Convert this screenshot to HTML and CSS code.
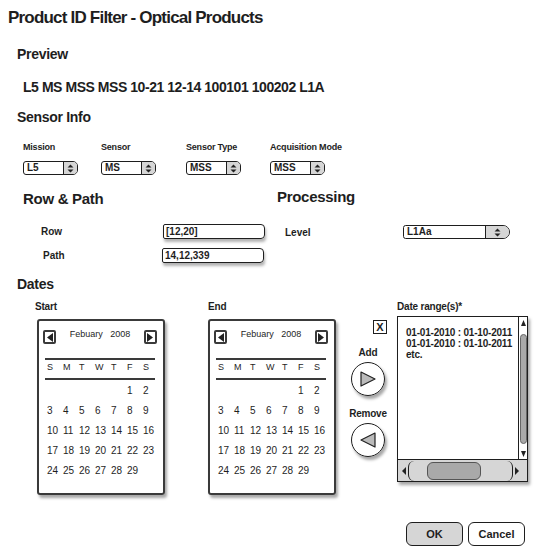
FILE: index.html
```html
<!DOCTYPE html>
<html lang="en">
<head>
  <meta charset="UTF-8" />
  <title>Product ID Filter - Optical Products</title>
  <link rel="stylesheet" href="styles.css">
</head>
<body>
  <div class="page">
    <h1 class="title">Product ID Filter - Optical Products</h1>

    <h2 class="section">Preview</h2>
    <p class="preview">L5 MS MSS MSS 10-21 12-14 100101 100202 L1A</p>

    <h2 class="section sensor-title">Sensor Info</h2>
    <div class="sensor-grid">
      <div class="field">
        <label>Mission</label>
        <div class="combo"><span class="combo-val">L5</span><span class="spin"><svg width="7" height="9" viewBox="0 0 7 9"><path d="M3.5 0.5 L6.5 3.5 H0.5 Z M3.5 8.5 L6.5 5.5 H0.5 Z" fill="#222"/></svg></span></div>
      </div>
      <div class="field">
        <label>Sensor</label>
        <div class="combo"><span class="combo-val">MS</span><span class="spin"><svg width="7" height="9" viewBox="0 0 7 9"><path d="M3.5 0.5 L6.5 3.5 H0.5 Z M3.5 8.5 L6.5 5.5 H0.5 Z" fill="#222"/></svg></span></div>
      </div>
      <div class="field">
        <label>Sensor Type</label>
        <div class="combo"><span class="combo-val">MSS</span><span class="spin"><svg width="7" height="9" viewBox="0 0 7 9"><path d="M3.5 0.5 L6.5 3.5 H0.5 Z M3.5 8.5 L6.5 5.5 H0.5 Z" fill="#222"/></svg></span></div>
      </div>
      <div class="field">
        <label>Acquisition Mode</label>
        <div class="combo"><span class="combo-val">MSS</span><span class="spin"><svg width="7" height="9" viewBox="0 0 7 9"><path d="M3.5 0.5 L6.5 3.5 H0.5 Z M3.5 8.5 L6.5 5.5 H0.5 Z" fill="#222"/></svg></span></div>
      </div>
    </div>

    <div class="rp">
      <div class="rp-col">
        <h3 class="sub">Row &amp; Path</h3>
        <div class="rp-row">
          <span class="rp-label">Row</span>
          <div class="textbox">[12,20]</div>
        </div>
        <div class="rp-row">
          <span class="rp-label path">Path</span>
          <div class="textbox">14,12,339</div>
        </div>
      </div>
      <div class="proc-col">
        <h3 class="sub">Processing</h3>
        <div class="proc-row">
          <span class="rp-label">Level</span>
          <div class="combo level"><span class="combo-val">L1Aa</span><span class="spin"><svg width="7" height="9" viewBox="0 0 7 9"><path d="M3.5 0.5 L6.5 3.5 H0.5 Z M3.5 8.5 L6.5 5.5 H0.5 Z" fill="#222"/></svg></span></div>
        </div>
      </div>
    </div>

    <h2 class="section dates-title">Dates</h2>
    <div class="dates">
      <div class="cal-col">
        <span class="small-label">Start</span>
        <div class="calendar">
          <div class="cal-head">
            <span class="cal-btn"><svg width="6" height="9" viewBox="0 0 6 9"><path d="M6 0 V9 L0 4.5 Z" fill="#222"/></svg></span>
            <span class="cal-month">Febuary&nbsp;&nbsp;&nbsp;2008</span>
            <span class="cal-btn"><svg width="6" height="9" viewBox="0 0 6 9"><path d="M0 0 V9 L6 4.5 Z" fill="#222"/></svg></span>
          </div>
          <div class="cal-days">
            <span>S</span><span>M</span><span>T</span><span>W</span><span>T</span><span>F</span><span>S</span>
          </div>
          <div class="cal-grid">
            <span></span><span></span><span></span><span></span><span></span><span>1</span><span>2</span>
            <span>3</span><span>4</span><span>5</span><span>6</span><span>7</span><span>8</span><span>9</span>
            <span>10</span><span>11</span><span>12</span><span>13</span><span>14</span><span>15</span><span>16</span>
            <span>17</span><span>18</span><span>19</span><span>20</span><span>21</span><span>22</span><span>23</span>
            <span>24</span><span>25</span><span>26</span><span>27</span><span>28</span><span>29</span><span></span>
          </div>
        </div>
      </div>

      <div class="cal-col end">
        <span class="small-label">End</span>
        <div class="calendar">
          <div class="cal-head">
            <span class="cal-btn"><svg width="6" height="9" viewBox="0 0 6 9"><path d="M6 0 V9 L0 4.5 Z" fill="#222"/></svg></span>
            <span class="cal-month">Febuary&nbsp;&nbsp;&nbsp;2008</span>
            <span class="cal-btn"><svg width="6" height="9" viewBox="0 0 6 9"><path d="M0 0 V9 L6 4.5 Z" fill="#222"/></svg></span>
          </div>
          <div class="cal-days">
            <span>S</span><span>M</span><span>T</span><span>W</span><span>T</span><span>F</span><span>S</span>
          </div>
          <div class="cal-grid">
            <span></span><span></span><span></span><span></span><span></span><span>1</span><span>2</span>
            <span>3</span><span>4</span><span>5</span><span>6</span><span>7</span><span>8</span><span>9</span>
            <span>10</span><span>11</span><span>12</span><span>13</span><span>14</span><span>15</span><span>16</span>
            <span>17</span><span>18</span><span>19</span><span>20</span><span>21</span><span>22</span><span>23</span>
            <span>24</span><span>25</span><span>26</span><span>27</span><span>28</span><span>29</span><span></span>
          </div>
        </div>
      </div>

      <div class="actions">
        <span class="x-btn">X</span>
        <span class="small-label">Add</span>
        <span class="round-btn"><svg width="18" height="18" viewBox="0 0 18 18"><path d="M2 2 L16 9 L2 16 Z" fill="#bbb" stroke="#222" stroke-width="1.2" stroke-linejoin="round"/></svg></span>
        <span class="small-label remove">Remove</span>
        <span class="round-btn"><svg width="18" height="18" viewBox="0 0 18 18"><path d="M16 2 L2 9 L16 16 Z" fill="#bbb" stroke="#222" stroke-width="1.2" stroke-linejoin="round"/></svg></span>
      </div>

      <div class="range-col">
        <span class="small-label">Date range(s)*</span>
        <div class="range-box">
          <div class="range-main">
            <div class="range-list">
              <div>01-01-2010 : 01-10-2011</div>
              <div>01-01-2010 : 01-10-2011</div>
              <div>etc.</div>
            </div>
            <div class="vscroll">
              <span class="sb-arrow"><svg width="5" height="6" viewBox="0 0 5 6"><path d="M2.5 0 L5 6 H0 Z" fill="#222"/></svg></span>
              <span class="vthumb"></span>
              <span class="sb-arrow"><svg width="5" height="6" viewBox="0 0 5 6"><path d="M0 0 H5 L2.5 6 Z" fill="#222"/></svg></span>
            </div>
          </div>
          <div class="hscroll">
            <span class="sb-arrow h"><svg width="4" height="8" viewBox="0 0 4 8"><path d="M4 0 V8 L0 4 Z" fill="#222"/></svg></span>
            <span class="htrack"><span class="hthumb"></span></span>
            <span class="sb-arrow h"><svg width="4" height="8" viewBox="0 0 4 8"><path d="M0 0 V8 L4 4 Z" fill="#222"/></svg></span>
          </div>
        </div>
      </div>
    </div>

    <div class="footer">
      <button class="btn primary">OK</button>
      <button class="btn">Cancel</button>
    </div>
  </div>
</body>
</html>
```

FILE: styles.css
```css
:root {
  --ink: #1e1e1e;
  --soft: #3a3a3a;
  --fill: #d6d6d6;
  --thumb: #a9a9a9;
  --shadow: 2px 3px 3px rgba(0, 0, 0, 0.35);
}

* {
  box-sizing: border-box;
  margin: 0;
  padding: 0;
}

body {
  font-family: "Liberation Sans", Arial, sans-serif;
  font-weight: bold;
  color: var(--ink);
  background: #fff;
  width: 543px;
  height: 557px;
  overflow: hidden;
}

.page {
  padding: 8px 0 0 8px;
}

.title {
  font-size: 17px;
  line-height: 20px;
  letter-spacing: -0.8px;
}

.section {
  font-size: 14px;
  line-height: 16px;
  margin: 18px 0 0 9px;
  letter-spacing: -0.3px;
}

.preview {
  font-size: 14px;
  line-height: 18px;
  margin: 16px 0 0 15px;
  letter-spacing: -0.45px;
}

/* sensor info */
.section.sensor-title {
  margin-top: 13px;
}

.sensor-grid {
  display: grid;
  grid-template-columns: 78px 85px 84px 90px;
  margin: 17px 0 0 15px;
}

.field label {
  display: block;
  font-size: 9px;
  line-height: 11px;
  margin-bottom: 8px;
  white-space: nowrap;
  letter-spacing: -0.2px;
}

.combo {
  display: flex;
  width: 55px;
  height: 14px;
  border: 1px solid var(--ink);
  border-radius: 3px 5px 5px 3px;
  background: #fff;
  font-size: 10px;
  line-height: 12px;
  overflow: hidden;
}

.combo-val {
  flex: 1;
  padding-left: 3px;
}

.spin {
  width: 14px;
  display: flex;
  align-items: center;
  justify-content: center;
  border-left: 1px solid var(--ink);
  background: var(--fill);
}

/* row & path / processing */
.rp {
  display: flex;
  margin-top: 15px;
}

.rp-col {
  width: 262px;
  padding-left: 15px;
}

.proc-col {
  flex: 1;
  padding-left: 7px;
}

.sub {
  font-size: 15px;
  line-height: 18px;
  letter-spacing: -0.3px;
}

.proc-col .sub {
  margin-top: -2px;
}

.rp-row {
  display: flex;
  align-items: center;
  margin-top: 16px;
}

.rp-row + .rp-row {
  margin-top: 9px;
}

.rp-label {
  font-size: 10px;
  width: 140px;
  padding-left: 18px;
}

.rp-label.path {
  padding-left: 20px;
  width: 139px;
}

.textbox {
  width: 102px;
  height: 15px;
  border: 1px solid var(--ink);
  border-radius: 2px 4px 4px 2px;
  box-shadow: 1px 3px 3px rgba(0, 0, 0, 0.3);
  font-size: 10px;
  line-height: 13px;
  padding-left: 2px;
}

.proc-row {
  display: flex;
  align-items: center;
  margin-top: 19px;
}

.proc-row .rp-label {
  padding-left: 8px;
  width: 126px;
}

.combo.level {
  width: 107px;
  border-radius: 3px 8px 8px 3px;
}

.combo.level .spin {
  width: 24px;
}

/* dates */
.dates-title {
  margin-top: 13px;
}

.dates {
  display: flex;
  margin: 9px 0 0 27px;
}

.small-label {
  display: block;
  font-size: 10px;
  line-height: 12px;
  white-space: nowrap;
  letter-spacing: -0.2px;
}

.cal-col {
  width: 173px;
}

.cal-col.end {
  width: 140px;
}

.calendar {
  width: 128px;
  height: 176px;
  margin: 6px 0 0 2px;
  border: 2px solid var(--soft);
  border-radius: 3px;
  box-shadow: var(--shadow);
  padding: 7px 6px 0 4px;
  font-weight: normal;
}

.cal-col.end .calendar {
  margin-left: 0;
}

.cal-head {
  display: flex;
  justify-content: space-between;
  align-items: center;
}

.cal-btn {
  width: 13px;
  height: 14px;
  display: flex;
  align-items: center;
  justify-content: center;
  border: 2px solid var(--soft);
  border-radius: 2px;
  margin-top: 2px;
}

.cal-month {
  font-size: 9px;
  margin-top: -4px;
}

.cal-days {
  display: grid;
  grid-template-columns: repeat(7, 16px);
  margin: 14px 2px 0;
  padding: 2px 0 6px 2px;
  border-top: 2px solid var(--soft);
  border-bottom: 2px solid var(--soft);
  font-size: 9px;
  line-height: 10px;
}

.cal-grid {
  display: grid;
  grid-template-columns: repeat(7, 16px);
  grid-auto-rows: 20px;
  margin: 5px 0 0 4px;
  font-size: 10px;
  line-height: 12px;
}

/* add / remove */
.actions {
  width: 48px;
  display: flex;
  flex-direction: column;
  align-items: center;
  padding: 19px 8px 0 0;
}

.x-btn {
  align-self: flex-end;
  margin-right: 1px;
  width: 14px;
  height: 14px;
  border: 1px solid var(--ink);
  font-size: 11px;
  line-height: 12px;
  text-align: center;
}

.actions .small-label {
  margin-top: 13px;
}

.actions .small-label.remove {
  margin-top: 12px;
}

.round-btn {
  width: 34px;
  height: 34px;
  margin-top: 3px;
  border: 1px solid var(--ink);
  border-radius: 50%;
  box-shadow: var(--shadow);
  display: flex;
  align-items: center;
  justify-content: center;
}

/* date ranges */
.range-col {
  padding-left: 1px;
}

.range-box {
  width: 131px;
  height: 166px;
  margin-top: 3px;
  border: 1px solid var(--ink);
  box-shadow: var(--shadow);
  display: flex;
  flex-direction: column;
}

.range-main {
  flex: 1;
  display: flex;
}

.range-list {
  flex: 1;
  padding: 10px 0 0 8px;
  font-size: 10px;
  line-height: 11px;
  white-space: nowrap;
  letter-spacing: -0.2px;
}

.vscroll {
  width: 9px;
  border-left: 1px solid var(--ink);
  display: flex;
  flex-direction: column;
  align-items: center;
}

.sb-arrow {
  height: 11px;
  display: flex;
  align-items: center;
  justify-content: center;
}

.vthumb {
  flex: 1;
  width: 7px;
  margin: 6px 0 4px;
  background: var(--thumb);
  border: 1px solid #666;
  border-radius: 4px;
}

.hscroll {
  height: 22px;
  display: flex;
  align-items: center;
  border-top: 1px solid var(--ink);
  background: var(--fill);
  padding: 0 6px 0 2px;
}

.sb-arrow.h {
  width: 8px;
  height: 20px;
}

.htrack {
  flex: 1;
  height: 20px;
  padding: 1px 0 1px 18px;
  border-left: 1px solid var(--ink);
  border-right: 1px solid var(--ink);
  border-radius: 6px;
}

.hthumb {
  display: block;
  width: 54px;
  height: 18px;
  background: var(--thumb);
  border: 1px solid #555;
  border-radius: 6px;
}

/* footer */
.footer {
  display: flex;
  gap: 5px;
  margin: 27px 0 0 398px;
}

.btn {
  width: 57px;
  height: 24px;
  border: 1px solid var(--ink);
  border-radius: 6px;
  background: #fff;
  font-family: inherit;
  font-weight: bold;
  font-size: 11px;
  color: var(--ink);
}

.btn.primary {
  background: var(--fill);
}
```
